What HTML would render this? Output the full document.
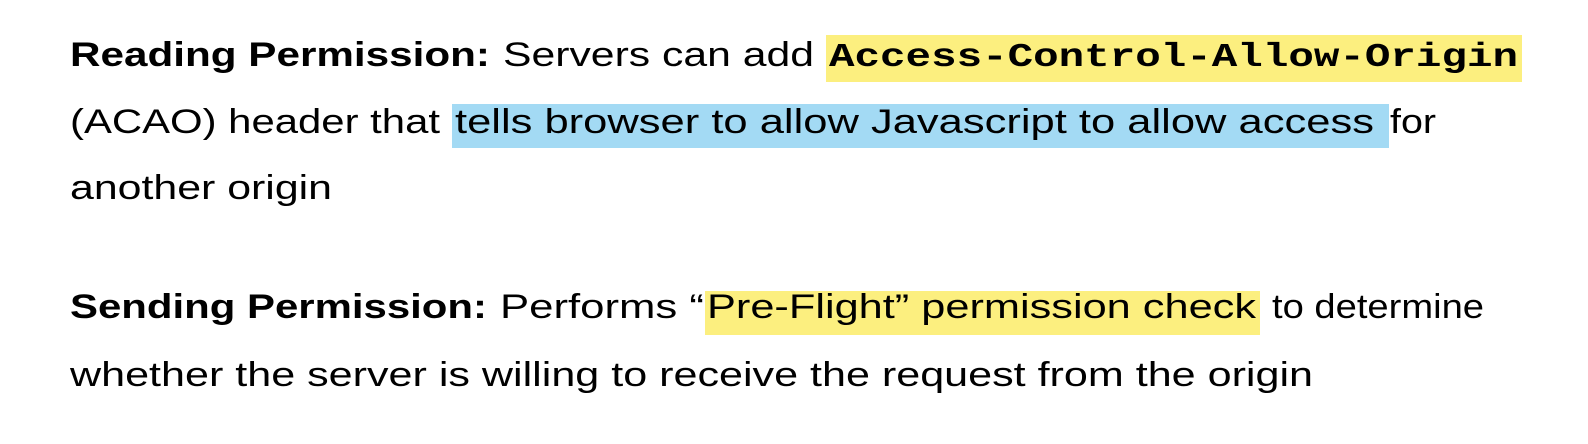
<!DOCTYPE html>
<html><head><meta charset="utf-8"><style>html,body{margin:0;padding:0;background:#fff;width:1588px;height:444px;overflow:hidden}</style></head>
<body>
<svg width="1588" height="444" xmlns="http://www.w3.org/2000/svg" style="display:block">
<g font-family="'Liberation Sans', sans-serif" font-size="34" fill="#000">
<rect x="826" y="35" width="696" height="47" fill="#fcef7f"/>
<rect x="452" y="104" width="937" height="44" fill="#a3daf4"/>
<rect x="705" y="291" width="555" height="44" fill="#fcef7f"/>
<text x="70" y="66" font-weight="bold" textLength="420" lengthAdjust="spacingAndGlyphs">Reading Permission:</text>
<text x="503" y="66" textLength="311" lengthAdjust="spacingAndGlyphs">Servers can add</text>
<text x="829" y="66" font-family="'Liberation Mono', monospace" font-weight="bold" font-size="33" textLength="689" lengthAdjust="spacingAndGlyphs">Access-Control-Allow-Origin</text>
<text x="70" y="133" textLength="370" lengthAdjust="spacingAndGlyphs">(ACAO) header that</text>
<text x="455" y="133" textLength="919" lengthAdjust="spacingAndGlyphs">tells browser to allow Javascript to allow access</text>
<text x="1390" y="133" textLength="46" lengthAdjust="spacingAndGlyphs">for</text>
<text x="70" y="199" textLength="262" lengthAdjust="spacingAndGlyphs">another origin</text>
<text x="70" y="318" font-weight="bold" textLength="417" lengthAdjust="spacingAndGlyphs">Sending Permission:</text>
<text x="500" y="318" textLength="204" lengthAdjust="spacingAndGlyphs">Performs “</text>
<text x="707" y="318" textLength="549" lengthAdjust="spacingAndGlyphs">Pre-Flight” permission check</text>
<text x="1272" y="318" textLength="212" lengthAdjust="spacingAndGlyphs">to determine</text>
<text x="70" y="386" textLength="1243" lengthAdjust="spacingAndGlyphs">whether the server is willing to receive the request from the origin</text>
</g>
</svg>
</body></html>
